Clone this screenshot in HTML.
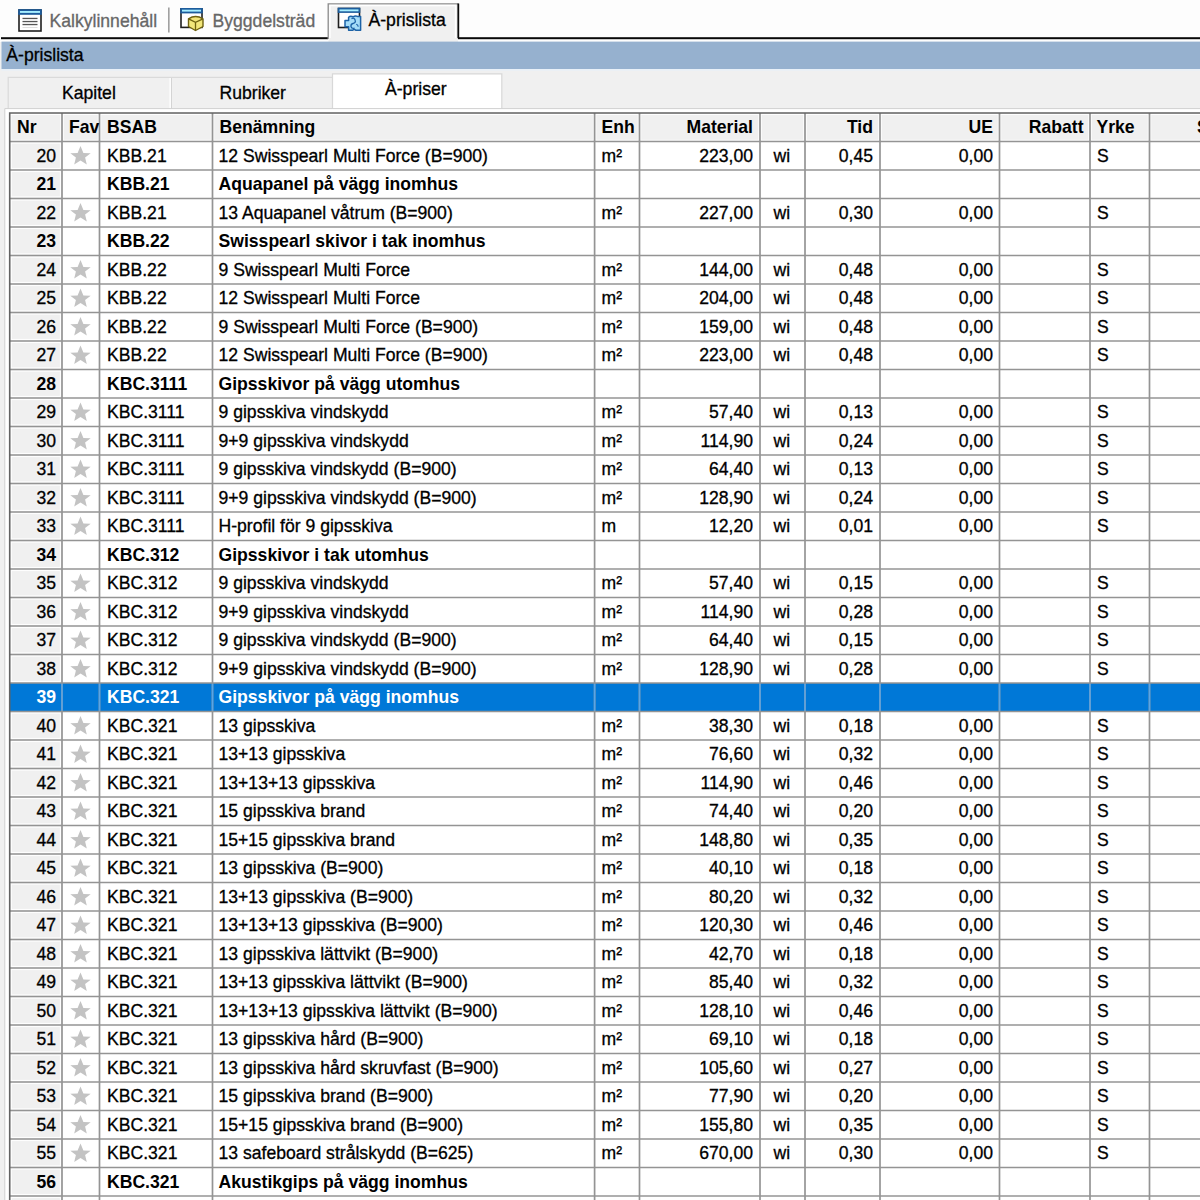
<!DOCTYPE html>
<html><head><meta charset="utf-8">
<style>
html,body{margin:0;padding:0;}
body{width:1200px;height:1200px;overflow:hidden;position:relative;background:#f0f0f0;
 font-family:"Liberation Sans",sans-serif;font-size:17.6px;color:#000;}
.t{-webkit-text-stroke-width:0.3px;position:absolute;white-space:nowrap;line-height:28.5px;height:28.5px;transform:scaleY(1.08);transform-origin:0 20.25px;}
.r{text-align:right;}
.b{font-weight:bold;-webkit-text-stroke-width:0;}
.w{color:#fff;}
svg{position:absolute;left:0;top:0;}
</style></head><body>

<svg width="1200" height="1200" viewBox="0 0 1200 1200"><rect x="0" y="0" width="1200" height="42" fill="#fdfdfd"/><rect x="1" y="37.2" width="327" height="2" fill="#0a0a0a"/><rect x="458" y="37.2" width="742" height="2" fill="#0a0a0a"/><rect x="328.5" y="4" width="129.5" height="38" fill="#f0f0f0"/><path d="M328.2 39 V3.8 H458.5" fill="none" stroke="#8a8a8a" stroke-width="1.3"/><path d="M458.3 3.5 V38.2" fill="none" stroke="#0a0a0a" stroke-width="1.8"/><path d="M330 38 V5.5 H455.5 V38" fill="none" stroke="#ffffff" stroke-width="1.3"/><rect x="168.2" y="7.5" width="1.3" height="25" fill="#8a8a8a"/><rect x="1.5" y="41.6" width="1198.5" height="27.4" fill="#96b1cf"/><rect x="1.5" y="69" width="1198.5" height="1.6" fill="#e8f0f8"/><rect x="8" y="77" width="324.5" height="33" fill="#f0f0f0"/><path d="M8.2 109 V77.3 H332.5" fill="none" stroke="#dadada" stroke-width="1.2"/><rect x="169.5" y="78" width="1.3" height="31" fill="#ffffff"/><rect x="171" y="78" width="1" height="31" fill="#d4d4d4"/><rect x="332.5" y="73.8" width="169.5" height="37" fill="#ffffff"/><path d="M332.5 110 V73.8 H501.8 V109" fill="none" stroke="#d8d8d8" stroke-width="1.2"/><rect x="5" y="108.5" width="1195" height="1091.5" fill="#ffffff"/><path d="M4.8 1200 V108.6 H1200" fill="none" stroke="#d0d0d0" stroke-width="1"/><rect x="9.7" y="113.0" width="1190.3" height="28.5" fill="#f0f0f0"/><rect x="9.7" y="141.5" width="52.3" height="1058.5" fill="#f0f0f0"/><rect x="9.7" y="683" width="1190.3" height="28.5" fill="#0078d7"/><rect x="10.9" y="114.4" width="49.9" height="25.9" fill="none" stroke="#ffffff" stroke-width="1"/><rect x="63.2" y="114.4" width="35.1" height="25.9" fill="none" stroke="#ffffff" stroke-width="1"/><rect x="100.7" y="114.4" width="110.6" height="25.9" fill="none" stroke="#ffffff" stroke-width="1"/><rect x="213.7" y="114.4" width="379.7" height="25.9" fill="none" stroke="#ffffff" stroke-width="1"/><rect x="595.8" y="114.4" width="42.5" height="25.9" fill="none" stroke="#ffffff" stroke-width="1"/><rect x="640.7" y="114.4" width="118.1" height="25.9" fill="none" stroke="#ffffff" stroke-width="1"/><rect x="761.2" y="114.4" width="42.6" height="25.9" fill="none" stroke="#ffffff" stroke-width="1"/><rect x="806.2" y="114.4" width="72.6" height="25.9" fill="none" stroke="#ffffff" stroke-width="1"/><rect x="881.2" y="114.4" width="117.1" height="25.9" fill="none" stroke="#ffffff" stroke-width="1"/><rect x="1000.7" y="114.4" width="88.1" height="25.9" fill="none" stroke="#ffffff" stroke-width="1"/><rect x="1091.2" y="114.4" width="57.1" height="25.9" fill="none" stroke="#ffffff" stroke-width="1"/><rect x="1150.7" y="114.4" width="108.1" height="25.9" fill="none" stroke="#ffffff" stroke-width="1"/><rect x="11.3" y="143.1" width="49.1" height="25.3" fill="none" stroke="#ffffff" stroke-width="1"/><rect x="11.3" y="171.6" width="49.1" height="25.3" fill="none" stroke="#ffffff" stroke-width="1"/><rect x="11.3" y="200.1" width="49.1" height="25.3" fill="none" stroke="#ffffff" stroke-width="1"/><rect x="11.3" y="228.6" width="49.1" height="25.3" fill="none" stroke="#ffffff" stroke-width="1"/><rect x="11.3" y="257.1" width="49.1" height="25.3" fill="none" stroke="#ffffff" stroke-width="1"/><rect x="11.3" y="285.6" width="49.1" height="25.3" fill="none" stroke="#ffffff" stroke-width="1"/><rect x="11.3" y="314.1" width="49.1" height="25.3" fill="none" stroke="#ffffff" stroke-width="1"/><rect x="11.3" y="342.6" width="49.1" height="25.3" fill="none" stroke="#ffffff" stroke-width="1"/><rect x="11.3" y="371.1" width="49.1" height="25.3" fill="none" stroke="#ffffff" stroke-width="1"/><rect x="11.3" y="399.6" width="49.1" height="25.3" fill="none" stroke="#ffffff" stroke-width="1"/><rect x="11.3" y="428.1" width="49.1" height="25.3" fill="none" stroke="#ffffff" stroke-width="1"/><rect x="11.3" y="456.6" width="49.1" height="25.3" fill="none" stroke="#ffffff" stroke-width="1"/><rect x="11.3" y="485.1" width="49.1" height="25.3" fill="none" stroke="#ffffff" stroke-width="1"/><rect x="11.3" y="513.6" width="49.1" height="25.3" fill="none" stroke="#ffffff" stroke-width="1"/><rect x="11.3" y="542.1" width="49.1" height="25.3" fill="none" stroke="#ffffff" stroke-width="1"/><rect x="11.3" y="570.6" width="49.1" height="25.3" fill="none" stroke="#ffffff" stroke-width="1"/><rect x="11.3" y="599.1" width="49.1" height="25.3" fill="none" stroke="#ffffff" stroke-width="1"/><rect x="11.3" y="627.6" width="49.1" height="25.3" fill="none" stroke="#ffffff" stroke-width="1"/><rect x="11.3" y="656.1" width="49.1" height="25.3" fill="none" stroke="#ffffff" stroke-width="1"/><rect x="11.3" y="713.1" width="49.1" height="25.3" fill="none" stroke="#ffffff" stroke-width="1"/><rect x="11.3" y="741.6" width="49.1" height="25.3" fill="none" stroke="#ffffff" stroke-width="1"/><rect x="11.3" y="770.1" width="49.1" height="25.3" fill="none" stroke="#ffffff" stroke-width="1"/><rect x="11.3" y="798.6" width="49.1" height="25.3" fill="none" stroke="#ffffff" stroke-width="1"/><rect x="11.3" y="827.1" width="49.1" height="25.3" fill="none" stroke="#ffffff" stroke-width="1"/><rect x="11.3" y="855.6" width="49.1" height="25.3" fill="none" stroke="#ffffff" stroke-width="1"/><rect x="11.3" y="884.1" width="49.1" height="25.3" fill="none" stroke="#ffffff" stroke-width="1"/><rect x="11.3" y="912.6" width="49.1" height="25.3" fill="none" stroke="#ffffff" stroke-width="1"/><rect x="11.3" y="941.1" width="49.1" height="25.3" fill="none" stroke="#ffffff" stroke-width="1"/><rect x="11.3" y="969.6" width="49.1" height="25.3" fill="none" stroke="#ffffff" stroke-width="1"/><rect x="11.3" y="998.1" width="49.1" height="25.3" fill="none" stroke="#ffffff" stroke-width="1"/><rect x="11.3" y="1026.6" width="49.1" height="25.3" fill="none" stroke="#ffffff" stroke-width="1"/><rect x="11.3" y="1055.1" width="49.1" height="25.3" fill="none" stroke="#ffffff" stroke-width="1"/><rect x="11.3" y="1083.6" width="49.1" height="25.3" fill="none" stroke="#ffffff" stroke-width="1"/><rect x="11.3" y="1112.1" width="49.1" height="25.3" fill="none" stroke="#ffffff" stroke-width="1"/><rect x="11.3" y="1140.6" width="49.1" height="25.3" fill="none" stroke="#ffffff" stroke-width="1"/><rect x="11.3" y="1169.1" width="49.1" height="25.3" fill="none" stroke="#ffffff" stroke-width="1"/><rect x="11.3" y="1197.6" width="49.1" height="25.3" fill="none" stroke="#ffffff" stroke-width="1"/><line x1="62" y1="113.0" x2="62" y2="1200" stroke="#949494" stroke-width="1.7"/><line x1="99.5" y1="113.0" x2="99.5" y2="1200" stroke="#949494" stroke-width="1.7"/><line x1="212.5" y1="113.0" x2="212.5" y2="1200" stroke="#949494" stroke-width="1.7"/><line x1="594.6" y1="113.0" x2="594.6" y2="1200" stroke="#949494" stroke-width="1.7"/><line x1="639.5" y1="113.0" x2="639.5" y2="1200" stroke="#949494" stroke-width="1.7"/><line x1="760" y1="113.0" x2="760" y2="1200" stroke="#949494" stroke-width="1.7"/><line x1="805" y1="113.0" x2="805" y2="1200" stroke="#949494" stroke-width="1.7"/><line x1="880" y1="113.0" x2="880" y2="1200" stroke="#949494" stroke-width="1.7"/><line x1="999.5" y1="113.0" x2="999.5" y2="1200" stroke="#949494" stroke-width="1.7"/><line x1="1090" y1="113.0" x2="1090" y2="1200" stroke="#949494" stroke-width="1.7"/><line x1="1149.5" y1="113.0" x2="1149.5" y2="1200" stroke="#949494" stroke-width="1.7"/><line x1="9.7" y1="141.5" x2="1200" y2="141.5" stroke="#949494" stroke-width="1.7"/><line x1="9.7" y1="170" x2="1200" y2="170" stroke="#949494" stroke-width="1.7"/><line x1="9.7" y1="198.5" x2="1200" y2="198.5" stroke="#949494" stroke-width="1.7"/><line x1="9.7" y1="227" x2="1200" y2="227" stroke="#949494" stroke-width="1.7"/><line x1="9.7" y1="255.5" x2="1200" y2="255.5" stroke="#949494" stroke-width="1.7"/><line x1="9.7" y1="284" x2="1200" y2="284" stroke="#949494" stroke-width="1.7"/><line x1="9.7" y1="312.5" x2="1200" y2="312.5" stroke="#949494" stroke-width="1.7"/><line x1="9.7" y1="341" x2="1200" y2="341" stroke="#949494" stroke-width="1.7"/><line x1="9.7" y1="369.5" x2="1200" y2="369.5" stroke="#949494" stroke-width="1.7"/><line x1="9.7" y1="398" x2="1200" y2="398" stroke="#949494" stroke-width="1.7"/><line x1="9.7" y1="426.5" x2="1200" y2="426.5" stroke="#949494" stroke-width="1.7"/><line x1="9.7" y1="455" x2="1200" y2="455" stroke="#949494" stroke-width="1.7"/><line x1="9.7" y1="483.5" x2="1200" y2="483.5" stroke="#949494" stroke-width="1.7"/><line x1="9.7" y1="512" x2="1200" y2="512" stroke="#949494" stroke-width="1.7"/><line x1="9.7" y1="540.5" x2="1200" y2="540.5" stroke="#949494" stroke-width="1.7"/><line x1="9.7" y1="569" x2="1200" y2="569" stroke="#949494" stroke-width="1.7"/><line x1="9.7" y1="597.5" x2="1200" y2="597.5" stroke="#949494" stroke-width="1.7"/><line x1="9.7" y1="626" x2="1200" y2="626" stroke="#949494" stroke-width="1.7"/><line x1="9.7" y1="654.5" x2="1200" y2="654.5" stroke="#949494" stroke-width="1.7"/><line x1="9.7" y1="683" x2="1200" y2="683" stroke="#949494" stroke-width="1.7"/><line x1="9.7" y1="711.5" x2="1200" y2="711.5" stroke="#949494" stroke-width="1.7"/><line x1="9.7" y1="740" x2="1200" y2="740" stroke="#949494" stroke-width="1.7"/><line x1="9.7" y1="768.5" x2="1200" y2="768.5" stroke="#949494" stroke-width="1.7"/><line x1="9.7" y1="797" x2="1200" y2="797" stroke="#949494" stroke-width="1.7"/><line x1="9.7" y1="825.5" x2="1200" y2="825.5" stroke="#949494" stroke-width="1.7"/><line x1="9.7" y1="854" x2="1200" y2="854" stroke="#949494" stroke-width="1.7"/><line x1="9.7" y1="882.5" x2="1200" y2="882.5" stroke="#949494" stroke-width="1.7"/><line x1="9.7" y1="911" x2="1200" y2="911" stroke="#949494" stroke-width="1.7"/><line x1="9.7" y1="939.5" x2="1200" y2="939.5" stroke="#949494" stroke-width="1.7"/><line x1="9.7" y1="968" x2="1200" y2="968" stroke="#949494" stroke-width="1.7"/><line x1="9.7" y1="996.5" x2="1200" y2="996.5" stroke="#949494" stroke-width="1.7"/><line x1="9.7" y1="1025" x2="1200" y2="1025" stroke="#949494" stroke-width="1.7"/><line x1="9.7" y1="1053.5" x2="1200" y2="1053.5" stroke="#949494" stroke-width="1.7"/><line x1="9.7" y1="1082" x2="1200" y2="1082" stroke="#949494" stroke-width="1.7"/><line x1="9.7" y1="1110.5" x2="1200" y2="1110.5" stroke="#949494" stroke-width="1.7"/><line x1="9.7" y1="1139" x2="1200" y2="1139" stroke="#949494" stroke-width="1.7"/><line x1="9.7" y1="1167.5" x2="1200" y2="1167.5" stroke="#949494" stroke-width="1.7"/><line x1="9.7" y1="1196" x2="1200" y2="1196" stroke="#949494" stroke-width="1.7"/><line x1="62" y1="683.8" x2="62" y2="710.7" stroke="#5aa5e6" stroke-width="1.5"/><line x1="99.5" y1="683.8" x2="99.5" y2="710.7" stroke="#5aa5e6" stroke-width="1.5"/><line x1="212.5" y1="683.8" x2="212.5" y2="710.7" stroke="#5aa5e6" stroke-width="1.5"/><line x1="594.6" y1="683.8" x2="594.6" y2="710.7" stroke="#5aa5e6" stroke-width="1.5"/><line x1="639.5" y1="683.8" x2="639.5" y2="710.7" stroke="#5aa5e6" stroke-width="1.5"/><line x1="760" y1="683.8" x2="760" y2="710.7" stroke="#5aa5e6" stroke-width="1.5"/><line x1="805" y1="683.8" x2="805" y2="710.7" stroke="#5aa5e6" stroke-width="1.5"/><line x1="880" y1="683.8" x2="880" y2="710.7" stroke="#5aa5e6" stroke-width="1.5"/><line x1="999.5" y1="683.8" x2="999.5" y2="710.7" stroke="#5aa5e6" stroke-width="1.5"/><line x1="1090" y1="683.8" x2="1090" y2="710.7" stroke="#5aa5e6" stroke-width="1.5"/><line x1="1149.5" y1="683.8" x2="1149.5" y2="710.7" stroke="#5aa5e6" stroke-width="1.5"/><path d="M9.7 1200 V113.0 H1200" fill="none" stroke="#636363" stroke-width="1.6"/><path transform="translate(80.5 155.5)" d="M0,-9.5 L2.9,-2.6 L10.2,-2.3 L4.6,2.0 L6.3,8.9 L0,5.1 L-6.3,8.9 L-4.6,2.0 L-10.2,-2.3 L-2.9,-2.6 Z" fill="#c3c3c3"/><path transform="translate(80.5 212.5)" d="M0,-9.5 L2.9,-2.6 L10.2,-2.3 L4.6,2.0 L6.3,8.9 L0,5.1 L-6.3,8.9 L-4.6,2.0 L-10.2,-2.3 L-2.9,-2.6 Z" fill="#c3c3c3"/><path transform="translate(80.5 269.5)" d="M0,-9.5 L2.9,-2.6 L10.2,-2.3 L4.6,2.0 L6.3,8.9 L0,5.1 L-6.3,8.9 L-4.6,2.0 L-10.2,-2.3 L-2.9,-2.6 Z" fill="#c3c3c3"/><path transform="translate(80.5 298)" d="M0,-9.5 L2.9,-2.6 L10.2,-2.3 L4.6,2.0 L6.3,8.9 L0,5.1 L-6.3,8.9 L-4.6,2.0 L-10.2,-2.3 L-2.9,-2.6 Z" fill="#c3c3c3"/><path transform="translate(80.5 326.5)" d="M0,-9.5 L2.9,-2.6 L10.2,-2.3 L4.6,2.0 L6.3,8.9 L0,5.1 L-6.3,8.9 L-4.6,2.0 L-10.2,-2.3 L-2.9,-2.6 Z" fill="#c3c3c3"/><path transform="translate(80.5 355)" d="M0,-9.5 L2.9,-2.6 L10.2,-2.3 L4.6,2.0 L6.3,8.9 L0,5.1 L-6.3,8.9 L-4.6,2.0 L-10.2,-2.3 L-2.9,-2.6 Z" fill="#c3c3c3"/><path transform="translate(80.5 412)" d="M0,-9.5 L2.9,-2.6 L10.2,-2.3 L4.6,2.0 L6.3,8.9 L0,5.1 L-6.3,8.9 L-4.6,2.0 L-10.2,-2.3 L-2.9,-2.6 Z" fill="#c3c3c3"/><path transform="translate(80.5 440.5)" d="M0,-9.5 L2.9,-2.6 L10.2,-2.3 L4.6,2.0 L6.3,8.9 L0,5.1 L-6.3,8.9 L-4.6,2.0 L-10.2,-2.3 L-2.9,-2.6 Z" fill="#c3c3c3"/><path transform="translate(80.5 469)" d="M0,-9.5 L2.9,-2.6 L10.2,-2.3 L4.6,2.0 L6.3,8.9 L0,5.1 L-6.3,8.9 L-4.6,2.0 L-10.2,-2.3 L-2.9,-2.6 Z" fill="#c3c3c3"/><path transform="translate(80.5 497.5)" d="M0,-9.5 L2.9,-2.6 L10.2,-2.3 L4.6,2.0 L6.3,8.9 L0,5.1 L-6.3,8.9 L-4.6,2.0 L-10.2,-2.3 L-2.9,-2.6 Z" fill="#c3c3c3"/><path transform="translate(80.5 526)" d="M0,-9.5 L2.9,-2.6 L10.2,-2.3 L4.6,2.0 L6.3,8.9 L0,5.1 L-6.3,8.9 L-4.6,2.0 L-10.2,-2.3 L-2.9,-2.6 Z" fill="#c3c3c3"/><path transform="translate(80.5 583)" d="M0,-9.5 L2.9,-2.6 L10.2,-2.3 L4.6,2.0 L6.3,8.9 L0,5.1 L-6.3,8.9 L-4.6,2.0 L-10.2,-2.3 L-2.9,-2.6 Z" fill="#c3c3c3"/><path transform="translate(80.5 611.5)" d="M0,-9.5 L2.9,-2.6 L10.2,-2.3 L4.6,2.0 L6.3,8.9 L0,5.1 L-6.3,8.9 L-4.6,2.0 L-10.2,-2.3 L-2.9,-2.6 Z" fill="#c3c3c3"/><path transform="translate(80.5 640)" d="M0,-9.5 L2.9,-2.6 L10.2,-2.3 L4.6,2.0 L6.3,8.9 L0,5.1 L-6.3,8.9 L-4.6,2.0 L-10.2,-2.3 L-2.9,-2.6 Z" fill="#c3c3c3"/><path transform="translate(80.5 668.5)" d="M0,-9.5 L2.9,-2.6 L10.2,-2.3 L4.6,2.0 L6.3,8.9 L0,5.1 L-6.3,8.9 L-4.6,2.0 L-10.2,-2.3 L-2.9,-2.6 Z" fill="#c3c3c3"/><path transform="translate(80.5 725.5)" d="M0,-9.5 L2.9,-2.6 L10.2,-2.3 L4.6,2.0 L6.3,8.9 L0,5.1 L-6.3,8.9 L-4.6,2.0 L-10.2,-2.3 L-2.9,-2.6 Z" fill="#c3c3c3"/><path transform="translate(80.5 754)" d="M0,-9.5 L2.9,-2.6 L10.2,-2.3 L4.6,2.0 L6.3,8.9 L0,5.1 L-6.3,8.9 L-4.6,2.0 L-10.2,-2.3 L-2.9,-2.6 Z" fill="#c3c3c3"/><path transform="translate(80.5 782.5)" d="M0,-9.5 L2.9,-2.6 L10.2,-2.3 L4.6,2.0 L6.3,8.9 L0,5.1 L-6.3,8.9 L-4.6,2.0 L-10.2,-2.3 L-2.9,-2.6 Z" fill="#c3c3c3"/><path transform="translate(80.5 811)" d="M0,-9.5 L2.9,-2.6 L10.2,-2.3 L4.6,2.0 L6.3,8.9 L0,5.1 L-6.3,8.9 L-4.6,2.0 L-10.2,-2.3 L-2.9,-2.6 Z" fill="#c3c3c3"/><path transform="translate(80.5 839.5)" d="M0,-9.5 L2.9,-2.6 L10.2,-2.3 L4.6,2.0 L6.3,8.9 L0,5.1 L-6.3,8.9 L-4.6,2.0 L-10.2,-2.3 L-2.9,-2.6 Z" fill="#c3c3c3"/><path transform="translate(80.5 868)" d="M0,-9.5 L2.9,-2.6 L10.2,-2.3 L4.6,2.0 L6.3,8.9 L0,5.1 L-6.3,8.9 L-4.6,2.0 L-10.2,-2.3 L-2.9,-2.6 Z" fill="#c3c3c3"/><path transform="translate(80.5 896.5)" d="M0,-9.5 L2.9,-2.6 L10.2,-2.3 L4.6,2.0 L6.3,8.9 L0,5.1 L-6.3,8.9 L-4.6,2.0 L-10.2,-2.3 L-2.9,-2.6 Z" fill="#c3c3c3"/><path transform="translate(80.5 925)" d="M0,-9.5 L2.9,-2.6 L10.2,-2.3 L4.6,2.0 L6.3,8.9 L0,5.1 L-6.3,8.9 L-4.6,2.0 L-10.2,-2.3 L-2.9,-2.6 Z" fill="#c3c3c3"/><path transform="translate(80.5 953.5)" d="M0,-9.5 L2.9,-2.6 L10.2,-2.3 L4.6,2.0 L6.3,8.9 L0,5.1 L-6.3,8.9 L-4.6,2.0 L-10.2,-2.3 L-2.9,-2.6 Z" fill="#c3c3c3"/><path transform="translate(80.5 982)" d="M0,-9.5 L2.9,-2.6 L10.2,-2.3 L4.6,2.0 L6.3,8.9 L0,5.1 L-6.3,8.9 L-4.6,2.0 L-10.2,-2.3 L-2.9,-2.6 Z" fill="#c3c3c3"/><path transform="translate(80.5 1010.5)" d="M0,-9.5 L2.9,-2.6 L10.2,-2.3 L4.6,2.0 L6.3,8.9 L0,5.1 L-6.3,8.9 L-4.6,2.0 L-10.2,-2.3 L-2.9,-2.6 Z" fill="#c3c3c3"/><path transform="translate(80.5 1039)" d="M0,-9.5 L2.9,-2.6 L10.2,-2.3 L4.6,2.0 L6.3,8.9 L0,5.1 L-6.3,8.9 L-4.6,2.0 L-10.2,-2.3 L-2.9,-2.6 Z" fill="#c3c3c3"/><path transform="translate(80.5 1067.5)" d="M0,-9.5 L2.9,-2.6 L10.2,-2.3 L4.6,2.0 L6.3,8.9 L0,5.1 L-6.3,8.9 L-4.6,2.0 L-10.2,-2.3 L-2.9,-2.6 Z" fill="#c3c3c3"/><path transform="translate(80.5 1096)" d="M0,-9.5 L2.9,-2.6 L10.2,-2.3 L4.6,2.0 L6.3,8.9 L0,5.1 L-6.3,8.9 L-4.6,2.0 L-10.2,-2.3 L-2.9,-2.6 Z" fill="#c3c3c3"/><path transform="translate(80.5 1124.5)" d="M0,-9.5 L2.9,-2.6 L10.2,-2.3 L4.6,2.0 L6.3,8.9 L0,5.1 L-6.3,8.9 L-4.6,2.0 L-10.2,-2.3 L-2.9,-2.6 Z" fill="#c3c3c3"/><path transform="translate(80.5 1153)" d="M0,-9.5 L2.9,-2.6 L10.2,-2.3 L4.6,2.0 L6.3,8.9 L0,5.1 L-6.3,8.9 L-4.6,2.0 L-10.2,-2.3 L-2.9,-2.6 Z" fill="#c3c3c3"/></svg>
<svg style="left:0;top:0" width="480" height="40" viewBox="0 0 480 40">
<rect x="19" y="10" width="22" height="21" fill="#ffffff" stroke="#1e1e1e" stroke-width="1.6"/>
<rect x="18.2" y="9.2" width="23.6" height="5.6" fill="#1d5c9c"/>
<rect x="20" y="11" width="20" height="1.9" fill="#a6eeff"/>
<rect x="22.5" y="17.8" width="15" height="1.3" fill="#555"/>
<rect x="22.5" y="20.9" width="15" height="1.3" fill="#555"/>
<rect x="22.5" y="23.9" width="15" height="1.3" fill="#555"/>
<rect x="22.5" y="27" width="15" height="0.7" fill="#d0d0d0"/>

<rect x="181" y="8.8" width="21" height="18.6" fill="#ffffff" stroke="#1e1e1e" stroke-width="1.6"/>
<rect x="180.2" y="8" width="22.6" height="5.4" fill="#1d5c9c"/>
<rect x="182" y="9.7" width="19" height="1.9" fill="#a6eeff"/>
<path d="M188.5 18.8 Q195.5 14.2 203 18.8 V26.5 L195.5 30.5 L188.5 26.5 Z" fill="#f2e67a" stroke="#6f6210" stroke-width="1.4" stroke-linejoin="round"/>
<path d="M188.5 18.8 L195.5 22.3 L203 18.8 M195.5 22.3 V30.5" fill="none" stroke="#6f6210" stroke-width="1.3"/>

<rect x="338.5" y="8.5" width="21" height="19" fill="#ffffff" stroke="#1e1e1e" stroke-width="1.6"/>
<rect x="337.7" y="7.7" width="22.6" height="5.2" fill="#1d5c9c"/>
<rect x="339.5" y="9.4" width="19" height="1.9" fill="#a6eeff"/>
<path d="M348.6 30.3 V26.8 H345 V20.4 H348.6 V17.2 Q350.5 15.6 353 16.8 Q355.5 15.2 357.5 16.4 H360.6 V30.3 H355.8 Q354.3 28.6 352.6 30.3 Z" fill="#a4dcf8" stroke="#1c62a6" stroke-width="1.5" stroke-linejoin="round"/>
<path d="M351.5 18.6 Q354.5 17.2 355.2 20.4 Q356 23 353 23.5 Q350.6 24 351 26.8 Q351.8 29 354.6 28.2" fill="none" stroke="#1c62a6" stroke-width="1.3"/>
<path d="M356.2 24.2 Q358.2 24.6 358.2 26.8" fill="none" stroke="#1c62a6" stroke-width="1.1"/>
</svg>
<div class="t " style="left:49.5px;top:6.55px;line-height:28.5px;height:28.5px;color:#676767;">Kalkylinnehåll</div>
<div class="t " style="left:212.5px;top:6.55px;line-height:28.5px;height:28.5px;color:#676767;">Byggdelsträd</div>
<div class="t " style="left:368.5px;top:6.35px;line-height:28.5px;height:28.5px;">À-prislista</div>
<div class="t " style="left:6.3px;top:41.05px;line-height:28.5px;height:28.5px;">À-prislista</div>
<div class="t " style="left:62px;top:78.5px;line-height:28.5px;height:28.5px;">Kapitel</div>
<div class="t " style="left:219.5px;top:78.5px;line-height:28.5px;height:28.5px;">Rubriker</div>
<div class="t " style="left:385px;top:75.15px;line-height:28.5px;height:28.5px;">À-priser</div>
<div class="t b" style="left:17px;top:113px;line-height:28.5px;height:28.5px;">Nr</div>
<div class="t b" style="left:69px;top:113px;line-height:28.5px;height:28.5px;">Fav</div>
<div class="t b" style="left:107px;top:113px;line-height:28.5px;height:28.5px;">BSAB</div>
<div class="t b" style="left:219.5px;top:113px;line-height:28.5px;height:28.5px;">Benämning</div>
<div class="t b" style="left:601.5px;top:113px;line-height:28.5px;height:28.5px;">Enh</div>
<div class="t r b" style="right:447px;top:113px;">Material</div>
<div class="t r b" style="right:327px;top:113px;">Tid</div>
<div class="t r b" style="right:207px;top:113px;">UE</div>
<div class="t r b" style="right:116.5px;top:113px;">Rabatt</div>
<div class="t b" style="left:1096.5px;top:113px;line-height:28.5px;height:28.5px;">Yrke</div>
<div class="t b" style="left:1197px;top:113px;line-height:28.5px;height:28.5px;">Summa</div>
<div class="t r " style="right:1144px;top:141.5px;">20</div>
<div class="t " style="left:107px;top:141.5px;line-height:28.5px;height:28.5px;">KBB.21</div>
<div class="t " style="left:218.5px;top:141.5px;line-height:28.5px;height:28.5px;">12 Swisspearl Multi Force (B=900)</div>
<div class="t " style="left:601.5px;top:141.5px;line-height:28.5px;height:28.5px;">m²</div>
<div class="t r " style="right:447px;top:141.5px;">223,00</div>
<div class="t " style="left:773.5px;top:141.5px;line-height:28.5px;height:28.5px;">wi</div>
<div class="t r " style="right:327px;top:141.5px;">0,45</div>
<div class="t r " style="right:207px;top:141.5px;">0,00</div>
<div class="t " style="left:1097px;top:141.5px;line-height:28.5px;height:28.5px;">S</div>
<div class="t r b" style="right:1144px;top:170px;">21</div>
<div class="t b" style="left:107px;top:170px;line-height:28.5px;height:28.5px;">KBB.21</div>
<div class="t b" style="left:218.5px;top:170px;line-height:28.5px;height:28.5px;">Aquapanel på vägg inomhus</div>
<div class="t r " style="right:1144px;top:198.5px;">22</div>
<div class="t " style="left:107px;top:198.5px;line-height:28.5px;height:28.5px;">KBB.21</div>
<div class="t " style="left:218.5px;top:198.5px;line-height:28.5px;height:28.5px;">13 Aquapanel våtrum (B=900)</div>
<div class="t " style="left:601.5px;top:198.5px;line-height:28.5px;height:28.5px;">m²</div>
<div class="t r " style="right:447px;top:198.5px;">227,00</div>
<div class="t " style="left:773.5px;top:198.5px;line-height:28.5px;height:28.5px;">wi</div>
<div class="t r " style="right:327px;top:198.5px;">0,30</div>
<div class="t r " style="right:207px;top:198.5px;">0,00</div>
<div class="t " style="left:1097px;top:198.5px;line-height:28.5px;height:28.5px;">S</div>
<div class="t r b" style="right:1144px;top:227px;">23</div>
<div class="t b" style="left:107px;top:227px;line-height:28.5px;height:28.5px;">KBB.22</div>
<div class="t b" style="left:218.5px;top:227px;line-height:28.5px;height:28.5px;">Swisspearl skivor i tak inomhus</div>
<div class="t r " style="right:1144px;top:255.5px;">24</div>
<div class="t " style="left:107px;top:255.5px;line-height:28.5px;height:28.5px;">KBB.22</div>
<div class="t " style="left:218.5px;top:255.5px;line-height:28.5px;height:28.5px;">9 Swisspearl Multi Force</div>
<div class="t " style="left:601.5px;top:255.5px;line-height:28.5px;height:28.5px;">m²</div>
<div class="t r " style="right:447px;top:255.5px;">144,00</div>
<div class="t " style="left:773.5px;top:255.5px;line-height:28.5px;height:28.5px;">wi</div>
<div class="t r " style="right:327px;top:255.5px;">0,48</div>
<div class="t r " style="right:207px;top:255.5px;">0,00</div>
<div class="t " style="left:1097px;top:255.5px;line-height:28.5px;height:28.5px;">S</div>
<div class="t r " style="right:1144px;top:284px;">25</div>
<div class="t " style="left:107px;top:284px;line-height:28.5px;height:28.5px;">KBB.22</div>
<div class="t " style="left:218.5px;top:284px;line-height:28.5px;height:28.5px;">12 Swisspearl Multi Force</div>
<div class="t " style="left:601.5px;top:284px;line-height:28.5px;height:28.5px;">m²</div>
<div class="t r " style="right:447px;top:284px;">204,00</div>
<div class="t " style="left:773.5px;top:284px;line-height:28.5px;height:28.5px;">wi</div>
<div class="t r " style="right:327px;top:284px;">0,48</div>
<div class="t r " style="right:207px;top:284px;">0,00</div>
<div class="t " style="left:1097px;top:284px;line-height:28.5px;height:28.5px;">S</div>
<div class="t r " style="right:1144px;top:312.5px;">26</div>
<div class="t " style="left:107px;top:312.5px;line-height:28.5px;height:28.5px;">KBB.22</div>
<div class="t " style="left:218.5px;top:312.5px;line-height:28.5px;height:28.5px;">9 Swisspearl Multi Force (B=900)</div>
<div class="t " style="left:601.5px;top:312.5px;line-height:28.5px;height:28.5px;">m²</div>
<div class="t r " style="right:447px;top:312.5px;">159,00</div>
<div class="t " style="left:773.5px;top:312.5px;line-height:28.5px;height:28.5px;">wi</div>
<div class="t r " style="right:327px;top:312.5px;">0,48</div>
<div class="t r " style="right:207px;top:312.5px;">0,00</div>
<div class="t " style="left:1097px;top:312.5px;line-height:28.5px;height:28.5px;">S</div>
<div class="t r " style="right:1144px;top:341px;">27</div>
<div class="t " style="left:107px;top:341px;line-height:28.5px;height:28.5px;">KBB.22</div>
<div class="t " style="left:218.5px;top:341px;line-height:28.5px;height:28.5px;">12 Swisspearl Multi Force (B=900)</div>
<div class="t " style="left:601.5px;top:341px;line-height:28.5px;height:28.5px;">m²</div>
<div class="t r " style="right:447px;top:341px;">223,00</div>
<div class="t " style="left:773.5px;top:341px;line-height:28.5px;height:28.5px;">wi</div>
<div class="t r " style="right:327px;top:341px;">0,48</div>
<div class="t r " style="right:207px;top:341px;">0,00</div>
<div class="t " style="left:1097px;top:341px;line-height:28.5px;height:28.5px;">S</div>
<div class="t r b" style="right:1144px;top:369.5px;">28</div>
<div class="t b" style="left:107px;top:369.5px;line-height:28.5px;height:28.5px;">KBC.3111</div>
<div class="t b" style="left:218.5px;top:369.5px;line-height:28.5px;height:28.5px;">Gipsskivor på vägg utomhus</div>
<div class="t r " style="right:1144px;top:398px;">29</div>
<div class="t " style="left:107px;top:398px;line-height:28.5px;height:28.5px;">KBC.3111</div>
<div class="t " style="left:218.5px;top:398px;line-height:28.5px;height:28.5px;">9 gipsskiva vindskydd</div>
<div class="t " style="left:601.5px;top:398px;line-height:28.5px;height:28.5px;">m²</div>
<div class="t r " style="right:447px;top:398px;">57,40</div>
<div class="t " style="left:773.5px;top:398px;line-height:28.5px;height:28.5px;">wi</div>
<div class="t r " style="right:327px;top:398px;">0,13</div>
<div class="t r " style="right:207px;top:398px;">0,00</div>
<div class="t " style="left:1097px;top:398px;line-height:28.5px;height:28.5px;">S</div>
<div class="t r " style="right:1144px;top:426.5px;">30</div>
<div class="t " style="left:107px;top:426.5px;line-height:28.5px;height:28.5px;">KBC.3111</div>
<div class="t " style="left:218.5px;top:426.5px;line-height:28.5px;height:28.5px;">9+9 gipsskiva vindskydd</div>
<div class="t " style="left:601.5px;top:426.5px;line-height:28.5px;height:28.5px;">m²</div>
<div class="t r " style="right:447px;top:426.5px;">114,90</div>
<div class="t " style="left:773.5px;top:426.5px;line-height:28.5px;height:28.5px;">wi</div>
<div class="t r " style="right:327px;top:426.5px;">0,24</div>
<div class="t r " style="right:207px;top:426.5px;">0,00</div>
<div class="t " style="left:1097px;top:426.5px;line-height:28.5px;height:28.5px;">S</div>
<div class="t r " style="right:1144px;top:455px;">31</div>
<div class="t " style="left:107px;top:455px;line-height:28.5px;height:28.5px;">KBC.3111</div>
<div class="t " style="left:218.5px;top:455px;line-height:28.5px;height:28.5px;">9 gipsskiva vindskydd (B=900)</div>
<div class="t " style="left:601.5px;top:455px;line-height:28.5px;height:28.5px;">m²</div>
<div class="t r " style="right:447px;top:455px;">64,40</div>
<div class="t " style="left:773.5px;top:455px;line-height:28.5px;height:28.5px;">wi</div>
<div class="t r " style="right:327px;top:455px;">0,13</div>
<div class="t r " style="right:207px;top:455px;">0,00</div>
<div class="t " style="left:1097px;top:455px;line-height:28.5px;height:28.5px;">S</div>
<div class="t r " style="right:1144px;top:483.5px;">32</div>
<div class="t " style="left:107px;top:483.5px;line-height:28.5px;height:28.5px;">KBC.3111</div>
<div class="t " style="left:218.5px;top:483.5px;line-height:28.5px;height:28.5px;">9+9 gipsskiva vindskydd (B=900)</div>
<div class="t " style="left:601.5px;top:483.5px;line-height:28.5px;height:28.5px;">m²</div>
<div class="t r " style="right:447px;top:483.5px;">128,90</div>
<div class="t " style="left:773.5px;top:483.5px;line-height:28.5px;height:28.5px;">wi</div>
<div class="t r " style="right:327px;top:483.5px;">0,24</div>
<div class="t r " style="right:207px;top:483.5px;">0,00</div>
<div class="t " style="left:1097px;top:483.5px;line-height:28.5px;height:28.5px;">S</div>
<div class="t r " style="right:1144px;top:512px;">33</div>
<div class="t " style="left:107px;top:512px;line-height:28.5px;height:28.5px;">KBC.3111</div>
<div class="t " style="left:218.5px;top:512px;line-height:28.5px;height:28.5px;">H-profil för 9 gipsskiva</div>
<div class="t " style="left:601.5px;top:512px;line-height:28.5px;height:28.5px;">m</div>
<div class="t r " style="right:447px;top:512px;">12,20</div>
<div class="t " style="left:773.5px;top:512px;line-height:28.5px;height:28.5px;">wi</div>
<div class="t r " style="right:327px;top:512px;">0,01</div>
<div class="t r " style="right:207px;top:512px;">0,00</div>
<div class="t " style="left:1097px;top:512px;line-height:28.5px;height:28.5px;">S</div>
<div class="t r b" style="right:1144px;top:540.5px;">34</div>
<div class="t b" style="left:107px;top:540.5px;line-height:28.5px;height:28.5px;">KBC.312</div>
<div class="t b" style="left:218.5px;top:540.5px;line-height:28.5px;height:28.5px;">Gipsskivor i tak utomhus</div>
<div class="t r " style="right:1144px;top:569px;">35</div>
<div class="t " style="left:107px;top:569px;line-height:28.5px;height:28.5px;">KBC.312</div>
<div class="t " style="left:218.5px;top:569px;line-height:28.5px;height:28.5px;">9 gipsskiva vindskydd</div>
<div class="t " style="left:601.5px;top:569px;line-height:28.5px;height:28.5px;">m²</div>
<div class="t r " style="right:447px;top:569px;">57,40</div>
<div class="t " style="left:773.5px;top:569px;line-height:28.5px;height:28.5px;">wi</div>
<div class="t r " style="right:327px;top:569px;">0,15</div>
<div class="t r " style="right:207px;top:569px;">0,00</div>
<div class="t " style="left:1097px;top:569px;line-height:28.5px;height:28.5px;">S</div>
<div class="t r " style="right:1144px;top:597.5px;">36</div>
<div class="t " style="left:107px;top:597.5px;line-height:28.5px;height:28.5px;">KBC.312</div>
<div class="t " style="left:218.5px;top:597.5px;line-height:28.5px;height:28.5px;">9+9 gipsskiva vindskydd</div>
<div class="t " style="left:601.5px;top:597.5px;line-height:28.5px;height:28.5px;">m²</div>
<div class="t r " style="right:447px;top:597.5px;">114,90</div>
<div class="t " style="left:773.5px;top:597.5px;line-height:28.5px;height:28.5px;">wi</div>
<div class="t r " style="right:327px;top:597.5px;">0,28</div>
<div class="t r " style="right:207px;top:597.5px;">0,00</div>
<div class="t " style="left:1097px;top:597.5px;line-height:28.5px;height:28.5px;">S</div>
<div class="t r " style="right:1144px;top:626px;">37</div>
<div class="t " style="left:107px;top:626px;line-height:28.5px;height:28.5px;">KBC.312</div>
<div class="t " style="left:218.5px;top:626px;line-height:28.5px;height:28.5px;">9 gipsskiva vindskydd (B=900)</div>
<div class="t " style="left:601.5px;top:626px;line-height:28.5px;height:28.5px;">m²</div>
<div class="t r " style="right:447px;top:626px;">64,40</div>
<div class="t " style="left:773.5px;top:626px;line-height:28.5px;height:28.5px;">wi</div>
<div class="t r " style="right:327px;top:626px;">0,15</div>
<div class="t r " style="right:207px;top:626px;">0,00</div>
<div class="t " style="left:1097px;top:626px;line-height:28.5px;height:28.5px;">S</div>
<div class="t r " style="right:1144px;top:654.5px;">38</div>
<div class="t " style="left:107px;top:654.5px;line-height:28.5px;height:28.5px;">KBC.312</div>
<div class="t " style="left:218.5px;top:654.5px;line-height:28.5px;height:28.5px;">9+9 gipsskiva vindskydd (B=900)</div>
<div class="t " style="left:601.5px;top:654.5px;line-height:28.5px;height:28.5px;">m²</div>
<div class="t r " style="right:447px;top:654.5px;">128,90</div>
<div class="t " style="left:773.5px;top:654.5px;line-height:28.5px;height:28.5px;">wi</div>
<div class="t r " style="right:327px;top:654.5px;">0,28</div>
<div class="t r " style="right:207px;top:654.5px;">0,00</div>
<div class="t " style="left:1097px;top:654.5px;line-height:28.5px;height:28.5px;">S</div>
<div class="t r b" style="right:1144px;top:683px;color:#fff;">39</div>
<div class="t b" style="left:107px;top:683px;line-height:28.5px;height:28.5px;color:#fff;">KBC.321</div>
<div class="t b" style="left:218.5px;top:683px;line-height:28.5px;height:28.5px;color:#fff;">Gipsskivor på vägg inomhus</div>
<div class="t r " style="right:1144px;top:711.5px;">40</div>
<div class="t " style="left:107px;top:711.5px;line-height:28.5px;height:28.5px;">KBC.321</div>
<div class="t " style="left:218.5px;top:711.5px;line-height:28.5px;height:28.5px;">13 gipsskiva</div>
<div class="t " style="left:601.5px;top:711.5px;line-height:28.5px;height:28.5px;">m²</div>
<div class="t r " style="right:447px;top:711.5px;">38,30</div>
<div class="t " style="left:773.5px;top:711.5px;line-height:28.5px;height:28.5px;">wi</div>
<div class="t r " style="right:327px;top:711.5px;">0,18</div>
<div class="t r " style="right:207px;top:711.5px;">0,00</div>
<div class="t " style="left:1097px;top:711.5px;line-height:28.5px;height:28.5px;">S</div>
<div class="t r " style="right:1144px;top:740px;">41</div>
<div class="t " style="left:107px;top:740px;line-height:28.5px;height:28.5px;">KBC.321</div>
<div class="t " style="left:218.5px;top:740px;line-height:28.5px;height:28.5px;">13+13 gipsskiva</div>
<div class="t " style="left:601.5px;top:740px;line-height:28.5px;height:28.5px;">m²</div>
<div class="t r " style="right:447px;top:740px;">76,60</div>
<div class="t " style="left:773.5px;top:740px;line-height:28.5px;height:28.5px;">wi</div>
<div class="t r " style="right:327px;top:740px;">0,32</div>
<div class="t r " style="right:207px;top:740px;">0,00</div>
<div class="t " style="left:1097px;top:740px;line-height:28.5px;height:28.5px;">S</div>
<div class="t r " style="right:1144px;top:768.5px;">42</div>
<div class="t " style="left:107px;top:768.5px;line-height:28.5px;height:28.5px;">KBC.321</div>
<div class="t " style="left:218.5px;top:768.5px;line-height:28.5px;height:28.5px;">13+13+13 gipsskiva</div>
<div class="t " style="left:601.5px;top:768.5px;line-height:28.5px;height:28.5px;">m²</div>
<div class="t r " style="right:447px;top:768.5px;">114,90</div>
<div class="t " style="left:773.5px;top:768.5px;line-height:28.5px;height:28.5px;">wi</div>
<div class="t r " style="right:327px;top:768.5px;">0,46</div>
<div class="t r " style="right:207px;top:768.5px;">0,00</div>
<div class="t " style="left:1097px;top:768.5px;line-height:28.5px;height:28.5px;">S</div>
<div class="t r " style="right:1144px;top:797px;">43</div>
<div class="t " style="left:107px;top:797px;line-height:28.5px;height:28.5px;">KBC.321</div>
<div class="t " style="left:218.5px;top:797px;line-height:28.5px;height:28.5px;">15 gipsskiva brand</div>
<div class="t " style="left:601.5px;top:797px;line-height:28.5px;height:28.5px;">m²</div>
<div class="t r " style="right:447px;top:797px;">74,40</div>
<div class="t " style="left:773.5px;top:797px;line-height:28.5px;height:28.5px;">wi</div>
<div class="t r " style="right:327px;top:797px;">0,20</div>
<div class="t r " style="right:207px;top:797px;">0,00</div>
<div class="t " style="left:1097px;top:797px;line-height:28.5px;height:28.5px;">S</div>
<div class="t r " style="right:1144px;top:825.5px;">44</div>
<div class="t " style="left:107px;top:825.5px;line-height:28.5px;height:28.5px;">KBC.321</div>
<div class="t " style="left:218.5px;top:825.5px;line-height:28.5px;height:28.5px;">15+15 gipsskiva brand</div>
<div class="t " style="left:601.5px;top:825.5px;line-height:28.5px;height:28.5px;">m²</div>
<div class="t r " style="right:447px;top:825.5px;">148,80</div>
<div class="t " style="left:773.5px;top:825.5px;line-height:28.5px;height:28.5px;">wi</div>
<div class="t r " style="right:327px;top:825.5px;">0,35</div>
<div class="t r " style="right:207px;top:825.5px;">0,00</div>
<div class="t " style="left:1097px;top:825.5px;line-height:28.5px;height:28.5px;">S</div>
<div class="t r " style="right:1144px;top:854px;">45</div>
<div class="t " style="left:107px;top:854px;line-height:28.5px;height:28.5px;">KBC.321</div>
<div class="t " style="left:218.5px;top:854px;line-height:28.5px;height:28.5px;">13 gipsskiva (B=900)</div>
<div class="t " style="left:601.5px;top:854px;line-height:28.5px;height:28.5px;">m²</div>
<div class="t r " style="right:447px;top:854px;">40,10</div>
<div class="t " style="left:773.5px;top:854px;line-height:28.5px;height:28.5px;">wi</div>
<div class="t r " style="right:327px;top:854px;">0,18</div>
<div class="t r " style="right:207px;top:854px;">0,00</div>
<div class="t " style="left:1097px;top:854px;line-height:28.5px;height:28.5px;">S</div>
<div class="t r " style="right:1144px;top:882.5px;">46</div>
<div class="t " style="left:107px;top:882.5px;line-height:28.5px;height:28.5px;">KBC.321</div>
<div class="t " style="left:218.5px;top:882.5px;line-height:28.5px;height:28.5px;">13+13 gipsskiva (B=900)</div>
<div class="t " style="left:601.5px;top:882.5px;line-height:28.5px;height:28.5px;">m²</div>
<div class="t r " style="right:447px;top:882.5px;">80,20</div>
<div class="t " style="left:773.5px;top:882.5px;line-height:28.5px;height:28.5px;">wi</div>
<div class="t r " style="right:327px;top:882.5px;">0,32</div>
<div class="t r " style="right:207px;top:882.5px;">0,00</div>
<div class="t " style="left:1097px;top:882.5px;line-height:28.5px;height:28.5px;">S</div>
<div class="t r " style="right:1144px;top:911px;">47</div>
<div class="t " style="left:107px;top:911px;line-height:28.5px;height:28.5px;">KBC.321</div>
<div class="t " style="left:218.5px;top:911px;line-height:28.5px;height:28.5px;">13+13+13 gipsskiva (B=900)</div>
<div class="t " style="left:601.5px;top:911px;line-height:28.5px;height:28.5px;">m²</div>
<div class="t r " style="right:447px;top:911px;">120,30</div>
<div class="t " style="left:773.5px;top:911px;line-height:28.5px;height:28.5px;">wi</div>
<div class="t r " style="right:327px;top:911px;">0,46</div>
<div class="t r " style="right:207px;top:911px;">0,00</div>
<div class="t " style="left:1097px;top:911px;line-height:28.5px;height:28.5px;">S</div>
<div class="t r " style="right:1144px;top:939.5px;">48</div>
<div class="t " style="left:107px;top:939.5px;line-height:28.5px;height:28.5px;">KBC.321</div>
<div class="t " style="left:218.5px;top:939.5px;line-height:28.5px;height:28.5px;">13 gipsskiva lättvikt (B=900)</div>
<div class="t " style="left:601.5px;top:939.5px;line-height:28.5px;height:28.5px;">m²</div>
<div class="t r " style="right:447px;top:939.5px;">42,70</div>
<div class="t " style="left:773.5px;top:939.5px;line-height:28.5px;height:28.5px;">wi</div>
<div class="t r " style="right:327px;top:939.5px;">0,18</div>
<div class="t r " style="right:207px;top:939.5px;">0,00</div>
<div class="t " style="left:1097px;top:939.5px;line-height:28.5px;height:28.5px;">S</div>
<div class="t r " style="right:1144px;top:968px;">49</div>
<div class="t " style="left:107px;top:968px;line-height:28.5px;height:28.5px;">KBC.321</div>
<div class="t " style="left:218.5px;top:968px;line-height:28.5px;height:28.5px;">13+13 gipsskiva lättvikt (B=900)</div>
<div class="t " style="left:601.5px;top:968px;line-height:28.5px;height:28.5px;">m²</div>
<div class="t r " style="right:447px;top:968px;">85,40</div>
<div class="t " style="left:773.5px;top:968px;line-height:28.5px;height:28.5px;">wi</div>
<div class="t r " style="right:327px;top:968px;">0,32</div>
<div class="t r " style="right:207px;top:968px;">0,00</div>
<div class="t " style="left:1097px;top:968px;line-height:28.5px;height:28.5px;">S</div>
<div class="t r " style="right:1144px;top:996.5px;">50</div>
<div class="t " style="left:107px;top:996.5px;line-height:28.5px;height:28.5px;">KBC.321</div>
<div class="t " style="left:218.5px;top:996.5px;line-height:28.5px;height:28.5px;">13+13+13 gipsskiva lättvikt (B=900)</div>
<div class="t " style="left:601.5px;top:996.5px;line-height:28.5px;height:28.5px;">m²</div>
<div class="t r " style="right:447px;top:996.5px;">128,10</div>
<div class="t " style="left:773.5px;top:996.5px;line-height:28.5px;height:28.5px;">wi</div>
<div class="t r " style="right:327px;top:996.5px;">0,46</div>
<div class="t r " style="right:207px;top:996.5px;">0,00</div>
<div class="t " style="left:1097px;top:996.5px;line-height:28.5px;height:28.5px;">S</div>
<div class="t r " style="right:1144px;top:1025px;">51</div>
<div class="t " style="left:107px;top:1025px;line-height:28.5px;height:28.5px;">KBC.321</div>
<div class="t " style="left:218.5px;top:1025px;line-height:28.5px;height:28.5px;">13 gipsskiva hård (B=900)</div>
<div class="t " style="left:601.5px;top:1025px;line-height:28.5px;height:28.5px;">m²</div>
<div class="t r " style="right:447px;top:1025px;">69,10</div>
<div class="t " style="left:773.5px;top:1025px;line-height:28.5px;height:28.5px;">wi</div>
<div class="t r " style="right:327px;top:1025px;">0,18</div>
<div class="t r " style="right:207px;top:1025px;">0,00</div>
<div class="t " style="left:1097px;top:1025px;line-height:28.5px;height:28.5px;">S</div>
<div class="t r " style="right:1144px;top:1053.5px;">52</div>
<div class="t " style="left:107px;top:1053.5px;line-height:28.5px;height:28.5px;">KBC.321</div>
<div class="t " style="left:218.5px;top:1053.5px;line-height:28.5px;height:28.5px;">13 gipsskiva hård skruvfast (B=900)</div>
<div class="t " style="left:601.5px;top:1053.5px;line-height:28.5px;height:28.5px;">m²</div>
<div class="t r " style="right:447px;top:1053.5px;">105,60</div>
<div class="t " style="left:773.5px;top:1053.5px;line-height:28.5px;height:28.5px;">wi</div>
<div class="t r " style="right:327px;top:1053.5px;">0,27</div>
<div class="t r " style="right:207px;top:1053.5px;">0,00</div>
<div class="t " style="left:1097px;top:1053.5px;line-height:28.5px;height:28.5px;">S</div>
<div class="t r " style="right:1144px;top:1082px;">53</div>
<div class="t " style="left:107px;top:1082px;line-height:28.5px;height:28.5px;">KBC.321</div>
<div class="t " style="left:218.5px;top:1082px;line-height:28.5px;height:28.5px;">15 gipsskiva brand (B=900)</div>
<div class="t " style="left:601.5px;top:1082px;line-height:28.5px;height:28.5px;">m²</div>
<div class="t r " style="right:447px;top:1082px;">77,90</div>
<div class="t " style="left:773.5px;top:1082px;line-height:28.5px;height:28.5px;">wi</div>
<div class="t r " style="right:327px;top:1082px;">0,20</div>
<div class="t r " style="right:207px;top:1082px;">0,00</div>
<div class="t " style="left:1097px;top:1082px;line-height:28.5px;height:28.5px;">S</div>
<div class="t r " style="right:1144px;top:1110.5px;">54</div>
<div class="t " style="left:107px;top:1110.5px;line-height:28.5px;height:28.5px;">KBC.321</div>
<div class="t " style="left:218.5px;top:1110.5px;line-height:28.5px;height:28.5px;">15+15 gipsskiva brand (B=900)</div>
<div class="t " style="left:601.5px;top:1110.5px;line-height:28.5px;height:28.5px;">m²</div>
<div class="t r " style="right:447px;top:1110.5px;">155,80</div>
<div class="t " style="left:773.5px;top:1110.5px;line-height:28.5px;height:28.5px;">wi</div>
<div class="t r " style="right:327px;top:1110.5px;">0,35</div>
<div class="t r " style="right:207px;top:1110.5px;">0,00</div>
<div class="t " style="left:1097px;top:1110.5px;line-height:28.5px;height:28.5px;">S</div>
<div class="t r " style="right:1144px;top:1139px;">55</div>
<div class="t " style="left:107px;top:1139px;line-height:28.5px;height:28.5px;">KBC.321</div>
<div class="t " style="left:218.5px;top:1139px;line-height:28.5px;height:28.5px;">13 safeboard strålskydd (B=625)</div>
<div class="t " style="left:601.5px;top:1139px;line-height:28.5px;height:28.5px;">m²</div>
<div class="t r " style="right:447px;top:1139px;">670,00</div>
<div class="t " style="left:773.5px;top:1139px;line-height:28.5px;height:28.5px;">wi</div>
<div class="t r " style="right:327px;top:1139px;">0,30</div>
<div class="t r " style="right:207px;top:1139px;">0,00</div>
<div class="t " style="left:1097px;top:1139px;line-height:28.5px;height:28.5px;">S</div>
<div class="t r b" style="right:1144px;top:1167.5px;">56</div>
<div class="t b" style="left:107px;top:1167.5px;line-height:28.5px;height:28.5px;">KBC.321</div>
<div class="t b" style="left:218.5px;top:1167.5px;line-height:28.5px;height:28.5px;">Akustikgips på vägg inomhus</div>
</body></html>
